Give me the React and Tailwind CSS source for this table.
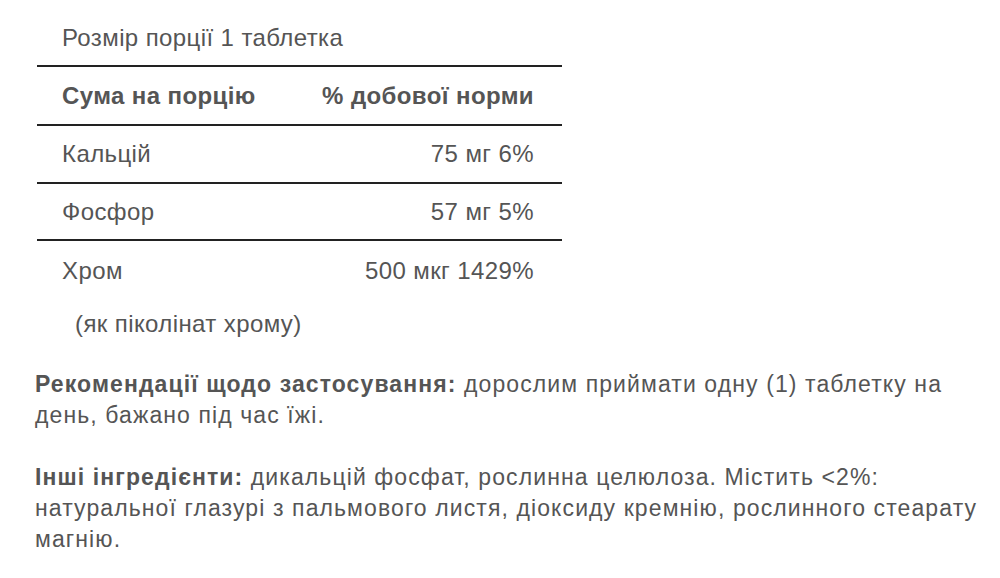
import React from 'react';

const rows = [
  { name: 'Кальцій', value: '75 мг 6%', h: 'h-[58px]' },
  { name: 'Фосфор', value: '57 мг 5%', h: 'h-[57px]' },
];

export default function App() {
  return (
    <div className="min-h-screen bg-white text-[#555] font-['Liberation_Sans',Arial,sans-serif]">
      {/* Facts table */}
      <div className="pt-[18px] pl-[37px] text-[24px] tracking-[0.4px]">
        <div className="w-[525px]">
          <div className="pl-[25px] h-[49px] leading-[40px] border-b-2 border-[#222]">Розмір порції 1 таблетка</div>
          <div className="flex justify-between items-center pl-[25px] pr-[28px] h-[59px] border-b-2 border-[#222] font-bold">
            <span>Сума на порцію</span>
            <span>% добової норми</span>
          </div>
          {rows.map((r) => (
            <div key={r.name} className={`flex justify-between items-center pl-[25px] pr-[28px] ${r.h} border-b-2 border-[#222]`}>
              <span>{r.name}</span>
              <span>{r.value}</span>
            </div>
          ))}
          <div className="flex justify-between items-center pl-[25px] pr-[28px] h-[60px]">
            <span>Хром</span>
            <span>500 мкг 1429%</span>
          </div>
          <div className="pl-[38px] h-[46px] leading-[46px]">(як піколінат хрому)</div>
        </div>
      </div>

      {/* Notes */}
      <div className="pl-[35px] pr-[15px] mt-[22px] text-[23px] leading-[31px] tracking-[1.1px]">
        <p>
          <b>Рекомендації щодо застосування:</b> дорослим приймати одну (1) таблетку на день, бажано під час їжі.
        </p>
        <p className="mt-[31px]">
          <b>Інші інгредієнти:</b> дикальцій фосфат, рослинна целюлоза. Містить &lt;2%: натуральної глазурі з пальмового листя, діоксиду кремнію, рослинного стеарату магнію.
        </p>
      </div>
    </div>
  );
}
